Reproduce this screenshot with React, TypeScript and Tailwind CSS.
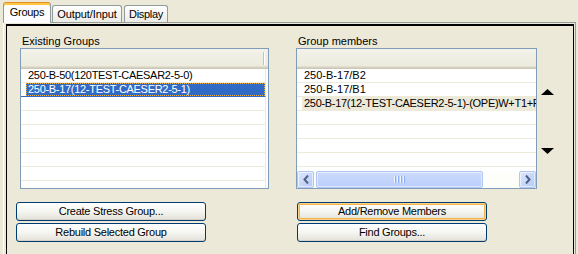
import React from "react";

const GRID = "border-[#EDEADA]";

function ScrollBtn({ dir }: { dir: "left" | "right" }) {
  return (
    <div className="w-[17px] h-[17px] shrink-0 rounded-[2px] border border-[#B3C6F2] bg-linear-to-br from-[#DDE7FE] to-[#B5C9F6] shadow-[inset_0_0_0_1px_rgba(255,255,255,0.55)] flex items-center justify-center">
      <svg width="6" height="9" viewBox="0 0 6 9">
        {dir === "left" ? (
          <polyline points="5,0.5 1.5,4.5 5,8.5" fill="none" stroke="#4D6185" strokeWidth="2" />
        ) : (
          <polyline points="1,0.5 4.5,4.5 1,8.5" fill="none" stroke="#4D6185" strokeWidth="2" />
        )}
      </svg>
    </div>
  );
}

function Header({ sep }: { sep?: boolean }) {
  return (
    <div className="h-[20px] shrink-0 flex bg-linear-to-b from-[#F3F2EA] to-[#EBEADB] shadow-[inset_0_-1px_0_#CBC7B8,inset_0_-2px_0_#D6D2C2,inset_0_-3px_0_#E2DECD]">
      {sep && (
        <>
          <div className="w-[242px] shrink-0" />
          <div className="w-[1px] h-[13px] mt-[3px] bg-[#C7C5B2]" />
          <div className="w-[1px] h-[13px] mt-[3px] bg-white" />
        </>
      )}
    </div>
  );
}

function PushButton({ label, focus }: { label: string; focus?: boolean }) {
  return (
    <div
      className={`w-[190px] h-[19px] shrink-0 rounded-[3px] border border-[#003C74] bg-linear-to-b from-white via-[#F5F5F1] to-[#E3E1D8] flex items-center justify-center tracking-[-0.25px] whitespace-nowrap ${
        focus ? "shadow-[inset_0_0_0_1px_#FBD58A,inset_0_0_0_2px_#F2B448]" : "shadow-[inset_0_-1px_0_#D6D0C5]"
      }`}
    >
      {label}
    </div>
  );
}

export default function App() {
  const emptyLeft = [0, 1, 2, 3, 4, 5, 6];
  const emptyRight = [0, 1, 2, 3, 4];
  return (
    <div className="w-[578px] h-[254px] bg-[#ECE9D8] flex flex-col overflow-hidden text-[11px] leading-[13px] text-black font-['Liberation_Sans',Arial,sans-serif]">
      {/* Tab strip */}
      <div className="h-[22px] shrink-0 flex items-end pl-[3px] relative z-10">
        <div className="w-[48px] h-[21px] -mb-px bg-[#FCFCFE] border-t border-l border-r border-t-[#E68B2C] border-x-[#919B9C] rounded-t-[3px] shadow-[inset_0_2px_0_#FFC73C] pt-[3px] text-center tracking-[-0.3px]">
          Groups
        </div>
        <div className="ml-[1px] w-[70px] h-[17px] border-t border-l border-r border-[#919B9C] rounded-t-[3px] bg-linear-to-b from-white to-[#ECEBE5] pt-[2px] text-center tracking-[-0.1px]">
          Output/Input
        </div>
        <div className="ml-[2px] w-[44px] h-[17px] border-t border-l border-r border-[#919B9C] rounded-t-[3px] bg-linear-to-b from-white to-[#ECEBE5] pt-[2px] text-center tracking-[-0.3px]">
          Display
        </div>
      </div>

      {/* Tab panel */}
      <div className="ml-[3px] w-[573px] flex-1 flex flex-col border-t border-l border-r border-t-[#919B9C] border-l-white border-r-[#919B9C] pt-[1px] pl-[2px] pr-[1px]">
        <div className="flex-1 border-t-2 border-l border-r border-black flex pl-[9px] pt-[8px]">
          {/* Left column */}
          <div className="w-[253px] shrink-0 flex flex-col">
            <div className="ml-[6px] h-[14px] leading-[14px]">Existing Groups</div>
            <div className="ml-[4px] w-[249px] h-[141px] border border-[#7F9DB9] bg-white flex flex-col overflow-hidden">
              <Header sep />
              <div className={`w-[245px] h-[14px] shrink-0 border-b border-r ${GRID} pl-[5px] flex`}>
                <span className="flex-1 pl-[2px] whitespace-nowrap tracking-[-0.3px]">250-B-50(120TEST-CAESAR2-5-0)</span>
              </div>
              <div className={`w-[245px] h-[14px] shrink-0 border-b border-r ${GRID} border-b-[#316AC5] pl-[5px] flex`}>
                <span className="flex-1 pl-[2px] bg-[#316AC5] text-white whitespace-nowrap tracking-[-0.3px] outline-1 outline-dotted outline-[#E9B04C] -outline-offset-1">
                  250-B-17(12-TEST-CAESER2-5-1)
                </span>
              </div>
              {emptyLeft.map((i) => (
                <div key={i} className={`w-[245px] h-[14px] shrink-0 border-b border-r ${GRID}`} />
              ))}
            </div>
            <div className="mt-[13px] flex flex-col gap-[2px]">
              <PushButton label="Create Stress Group..." />
              <PushButton label="Rebuild Selected Group" />
            </div>
          </div>

          {/* Right column */}
          <div className="ml-[27px] w-[241px] shrink-0 flex flex-col">
            <div className="ml-[2px] h-[14px] leading-[14px]">Group members</div>
            <div className="w-[241px] h-[141px] border border-[#7F9DB9] bg-white flex flex-col overflow-hidden">
              <Header />
              <div className="flex-1 flex flex-col overflow-hidden">
                <div className={`h-[14px] shrink-0 border-b ${GRID} pl-[7px] whitespace-nowrap`}>250-B-17/B2</div>
                <div className={`h-[14px] shrink-0 border-b ${GRID} pl-[7px] whitespace-nowrap`}>250-B-17/B1</div>
                <div className={`h-[14px] shrink-0 border-b ${GRID} pl-[5px] flex overflow-hidden`}>
                  <span className="flex-1 pl-[2px] bg-[#ECE9D8] whitespace-nowrap overflow-hidden tracking-[-0.3px]">
                    250-B-17(12-TEST-CAESER2-5-1)-(OPE)W+T1+P1
                  </span>
                </div>
                {emptyRight.map((i) => (
                  <div key={i} className={`h-[14px] shrink-0 border-b ${GRID}`} />
                ))}
              </div>
              {/* Horizontal scrollbar */}
              <div className="h-[17px] shrink-0 flex bg-[#FDFDFA]">
                <ScrollBtn dir="left" />
                <div className="ml-[2px] w-[167px] shrink-0 rounded-[2px] border border-[#B1C5F4] bg-linear-to-b from-[#CCDBFD] to-[#BBCEFA] shadow-[inset_0_0_0_1px_rgba(255,255,255,0.5)] flex items-center justify-center gap-[1px]">
                  {[0, 1, 2, 3].map((i) => (
                    <div key={i} className="flex">
                      <div className="w-[1px] h-[7px] bg-[#EEF4FE]" />
                      <div className="w-[1px] h-[7px] bg-[#8CB0F8]" />
                    </div>
                  ))}
                </div>
                <div className="flex-1" />
                <ScrollBtn dir="right" />
              </div>
            </div>
            <div className="mt-[13px] ml-[1px] flex flex-col gap-[2px]">
              <PushButton label="Add/Remove Members" focus />
              <PushButton label="Find Groups..." />
            </div>
          </div>

          {/* Move arrows */}
          <div className="ml-[4px] flex flex-col">
            <svg className="mt-[55px]" width="13" height="6" viewBox="0 0 13 6">
              <polygon points="0,6 13,6 6.5,0" fill="#000" />
            </svg>
            <svg className="mt-[53px]" width="13" height="6" viewBox="0 0 13 6">
              <polygon points="0,0 13,0 6.5,6" fill="#000" />
            </svg>
          </div>
        </div>
      </div>
    </div>
  );
}
